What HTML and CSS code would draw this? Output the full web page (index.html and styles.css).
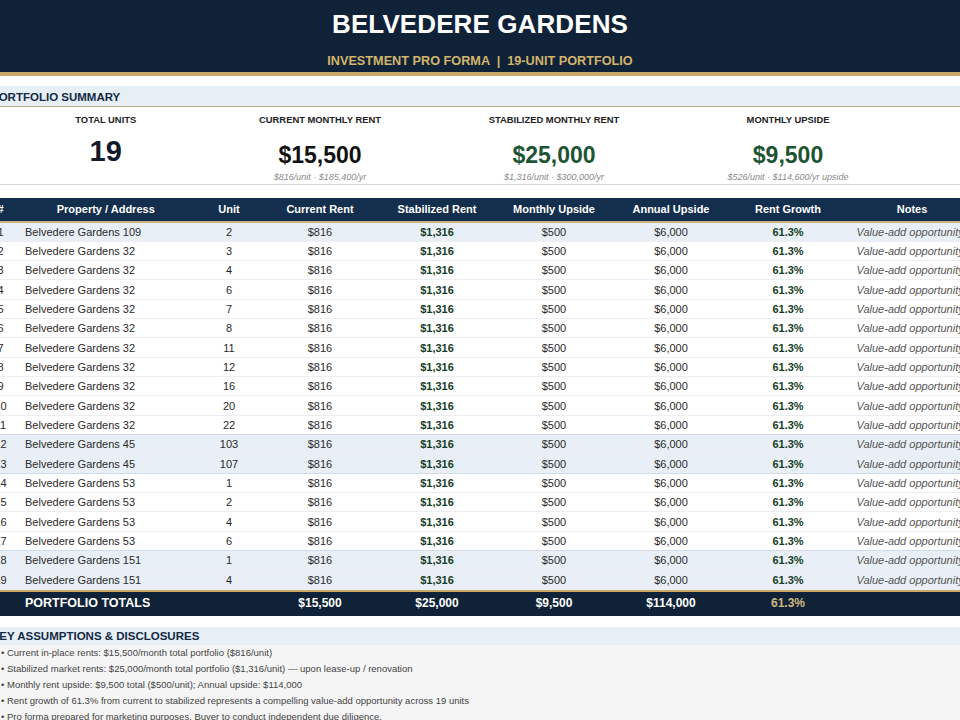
FILE: index.html
```html
<!DOCTYPE html>
<html>
<head>
<meta charset="utf-8">
<link rel="stylesheet" href="styles.css">
</head>
<body>
<div class="page">
  <header class="hero">
    <h1 class="hero-title">BELVEDERE GARDENS</h1>
    <div class="hero-sub">INVESTMENT PRO FORMA &nbsp;|&nbsp; 19-UNIT PORTFOLIO</div>
  </header>
  <div class="gold-rule"></div>

  <section class="summary">
    <div class="section-bar">PORTFOLIO SUMMARY</div>
    <div class="summary-grid">
      <div class="stat stat-units">
        <div class="stat-label">TOTAL UNITS</div>
        <div class="stat-big">19</div>
      </div>
      <div class="stat stat-current">
        <div class="stat-label">CURRENT MONTHLY RENT</div>
        <div class="stat-value">$15,500</div>
        <div class="stat-sub">$816/unit · $185,400/yr</div>
      </div>
      <div class="stat stat-stab">
        <div class="stat-label">STABILIZED MONTHLY RENT</div>
        <div class="stat-value green">$25,000</div>
        <div class="stat-sub">$1,316/unit · $300,000/yr</div>
      </div>
      <div class="stat stat-upside">
        <div class="stat-label">MONTHLY UPSIDE</div>
        <div class="stat-value green">$9,500</div>
        <div class="stat-sub">$526/unit · $114,600/yr upside</div>
      </div>
    </div>
  </section>

  <div class="table">
    <div class="row head">
      <div class="c num">#</div><div class="c">Property / Address</div><div class="c">Unit</div><div class="c">Current Rent</div><div class="c">Stabilized Rent</div><div class="c">Monthly Upside</div><div class="c">Annual Upside</div><div class="c">Rent Growth</div><div class="c">Notes</div>
    </div>
    <div class="row alt"><div class="c num">1</div><div class="c l">Belvedere Gardens 109</div><div class="c">2</div><div class="c">$816</div><div class="c b">$1,316</div><div class="c">$500</div><div class="c">$6,000</div><div class="c b">61.3%</div><div class="c n">Value-add opportunity</div></div>
    <div class="row"><div class="c num">2</div><div class="c l">Belvedere Gardens 32</div><div class="c">3</div><div class="c">$816</div><div class="c b">$1,316</div><div class="c">$500</div><div class="c">$6,000</div><div class="c b">61.3%</div><div class="c n">Value-add opportunity</div></div>
    <div class="row"><div class="c num">3</div><div class="c l">Belvedere Gardens 32</div><div class="c">4</div><div class="c">$816</div><div class="c b">$1,316</div><div class="c">$500</div><div class="c">$6,000</div><div class="c b">61.3%</div><div class="c n">Value-add opportunity</div></div>
    <div class="row"><div class="c num">4</div><div class="c l">Belvedere Gardens 32</div><div class="c">6</div><div class="c">$816</div><div class="c b">$1,316</div><div class="c">$500</div><div class="c">$6,000</div><div class="c b">61.3%</div><div class="c n">Value-add opportunity</div></div>
    <div class="row"><div class="c num">5</div><div class="c l">Belvedere Gardens 32</div><div class="c">7</div><div class="c">$816</div><div class="c b">$1,316</div><div class="c">$500</div><div class="c">$6,000</div><div class="c b">61.3%</div><div class="c n">Value-add opportunity</div></div>
    <div class="row"><div class="c num">6</div><div class="c l">Belvedere Gardens 32</div><div class="c">8</div><div class="c">$816</div><div class="c b">$1,316</div><div class="c">$500</div><div class="c">$6,000</div><div class="c b">61.3%</div><div class="c n">Value-add opportunity</div></div>
    <div class="row"><div class="c num">7</div><div class="c l">Belvedere Gardens 32</div><div class="c">11</div><div class="c">$816</div><div class="c b">$1,316</div><div class="c">$500</div><div class="c">$6,000</div><div class="c b">61.3%</div><div class="c n">Value-add opportunity</div></div>
    <div class="row"><div class="c num">8</div><div class="c l">Belvedere Gardens 32</div><div class="c">12</div><div class="c">$816</div><div class="c b">$1,316</div><div class="c">$500</div><div class="c">$6,000</div><div class="c b">61.3%</div><div class="c n">Value-add opportunity</div></div>
    <div class="row"><div class="c num">9</div><div class="c l">Belvedere Gardens 32</div><div class="c">16</div><div class="c">$816</div><div class="c b">$1,316</div><div class="c">$500</div><div class="c">$6,000</div><div class="c b">61.3%</div><div class="c n">Value-add opportunity</div></div>
    <div class="row"><div class="c num">10</div><div class="c l">Belvedere Gardens 32</div><div class="c">20</div><div class="c">$816</div><div class="c b">$1,316</div><div class="c">$500</div><div class="c">$6,000</div><div class="c b">61.3%</div><div class="c n">Value-add opportunity</div></div>
    <div class="row grp-end"><div class="c num">11</div><div class="c l">Belvedere Gardens 32</div><div class="c">22</div><div class="c">$816</div><div class="c b">$1,316</div><div class="c">$500</div><div class="c">$6,000</div><div class="c b">61.3%</div><div class="c n">Value-add opportunity</div></div>
    <div class="row alt"><div class="c num">12</div><div class="c l">Belvedere Gardens 45</div><div class="c">103</div><div class="c">$816</div><div class="c b">$1,316</div><div class="c">$500</div><div class="c">$6,000</div><div class="c b">61.3%</div><div class="c n">Value-add opportunity</div></div>
    <div class="row alt grp-end"><div class="c num">13</div><div class="c l">Belvedere Gardens 45</div><div class="c">107</div><div class="c">$816</div><div class="c b">$1,316</div><div class="c">$500</div><div class="c">$6,000</div><div class="c b">61.3%</div><div class="c n">Value-add opportunity</div></div>
    <div class="row"><div class="c num">14</div><div class="c l">Belvedere Gardens 53</div><div class="c">1</div><div class="c">$816</div><div class="c b">$1,316</div><div class="c">$500</div><div class="c">$6,000</div><div class="c b">61.3%</div><div class="c n">Value-add opportunity</div></div>
    <div class="row"><div class="c num">15</div><div class="c l">Belvedere Gardens 53</div><div class="c">2</div><div class="c">$816</div><div class="c b">$1,316</div><div class="c">$500</div><div class="c">$6,000</div><div class="c b">61.3%</div><div class="c n">Value-add opportunity</div></div>
    <div class="row"><div class="c num">16</div><div class="c l">Belvedere Gardens 53</div><div class="c">4</div><div class="c">$816</div><div class="c b">$1,316</div><div class="c">$500</div><div class="c">$6,000</div><div class="c b">61.3%</div><div class="c n">Value-add opportunity</div></div>
    <div class="row grp-end"><div class="c num">17</div><div class="c l">Belvedere Gardens 53</div><div class="c">6</div><div class="c">$816</div><div class="c b">$1,316</div><div class="c">$500</div><div class="c">$6,000</div><div class="c b">61.3%</div><div class="c n">Value-add opportunity</div></div>
    <div class="row alt"><div class="c num">18</div><div class="c l">Belvedere Gardens 151</div><div class="c">1</div><div class="c">$816</div><div class="c b">$1,316</div><div class="c">$500</div><div class="c">$6,000</div><div class="c b">61.3%</div><div class="c n">Value-add opportunity</div></div>
    <div class="row alt last"><div class="c num">19</div><div class="c l">Belvedere Gardens 151</div><div class="c">4</div><div class="c">$816</div><div class="c b">$1,316</div><div class="c">$500</div><div class="c">$6,000</div><div class="c b">61.3%</div><div class="c n">Value-add opportunity</div></div>
    <div class="row total">
      <div class="c num"></div><div class="c l">PORTFOLIO TOTALS</div><div class="c"></div><div class="c">$15,500</div><div class="c">$25,000</div><div class="c">$9,500</div><div class="c">$114,000</div><div class="c gold">61.3%</div><div class="c"></div>
    </div>
  </div>

  <section class="assumptions">
    <div class="section-bar plain">KEY ASSUMPTIONS &amp; DISCLOSURES</div>
    <ul class="notes">
      <li>• Current in-place rents: $15,500/month total portfolio ($816/unit)</li>
      <li>• Stabilized market rents: $25,000/month total portfolio ($1,316/unit) — upon lease-up / renovation</li>
      <li>• Monthly rent upside: $9,500 total ($500/unit); Annual upside: $114,000</li>
      <li>• Rent growth of 61.3% from current to stabilized represents a compelling value-add opportunity across 19 units</li>
      <li>• Pro forma prepared for marketing purposes. Buyer to conduct independent due diligence.</li>
    </ul>
  </section>
</div>
</body>
</html>
```

FILE: styles.css
```css
:root {
  --navy: #0f2238;
  --gold: #c9ab66;
  --cols: 36px 181.5px 65px 117px 117px 117px 117px 117px 131px;
}
html, body {
  margin: 0;
  padding: 0;
  background: #ffffff;
  overflow: hidden;
}
body {
  font-family: "Liberation Sans", Arial, sans-serif;
  color: #222;
}
.page {
  width: 999px;
  margin-left: -21px;
}
.hero {
  background: var(--navy);
  height: 72px;
  display: flex;
  flex-direction: column;
  align-items: center;
  margin: 0 18px 0 0;
  padding-left: 21px;
}
.hero-title {
  margin: 0;
  padding-top: 9px;
  font-size: 26px;
  line-height: 30px;
  font-weight: 700;
  color: #ffffff;
  letter-spacing: 0.1px;
}
.hero-sub {
  margin-top: 14px;
  font-size: 12.7px;
  line-height: 16px;
  font-weight: 700;
  color: #d3b46c;
}
.gold-rule {
  height: 4px;
  background: var(--gold);
  margin-bottom: 10px;
}
.section-bar {
  background: #e6eef6;
  height: 20px;
  line-height: 22px;
  padding-left: 12px;
  font-size: 11.5px;
  font-weight: 700;
  color: #132a44;
  border-bottom: 1.5px solid #b9ad8c;
}
.section-bar.plain {
  border-bottom: none;
  height: 18px;
  line-height: 19px;
}
.summary-grid {
  display: grid;
  grid-template-columns: var(--cols);
  border-bottom: 1.5px solid #d6d6d6;
  height: 77px;
}
.stat {
  justify-self: center;
  width: max-content;
  display: flex;
  flex-direction: column;
  align-items: center;
}
.stat-units { grid-column: 2; }
.stat-current { grid-column: 4; }
.stat-stab { grid-column: 6; }
.stat-upside { grid-column: 8; }
.stat-label {
  margin-top: 7px;
  font-size: 9.4px;
  line-height: 11px;
  font-weight: 700;
  color: #222;
}
.stat-big {
  margin-top: 10px;
  font-size: 29px;
  line-height: 32px;
  font-weight: 700;
  color: #141a2a;
}
.stat-value {
  margin-top: 17px;
  font-size: 23px;
  line-height: 26px;
  font-weight: 700;
  color: #111;
}
.stat-value.green { color: #1d5433; }
.stat-sub {
  margin-top: 4px;
  font-size: 9px;
  line-height: 11px;
  font-style: italic;
  color: #8a8a8a;
}
.table {
  margin-top: 13px;
}
.row {
  display: grid;
  grid-template-columns: var(--cols);
  height: 19.33px;
  align-items: center;
  font-size: 11px;
  color: #2a2a2a;
  border-bottom: 1px solid #eceef1;
  box-sizing: border-box;
  white-space: nowrap;
}
.row .c { text-align: center; overflow: visible; }
.row .c.num { padding-left: 7px; }
.row .c.l { text-align: left; padding-left: 10px; }
.row .c.b { font-weight: 700; color: #173d27; }
.row .c.n { text-align: left; padding-left: 10px; font-style: italic; color: #555; }
.row.alt { background: #e8eff6; }
.row.grp-end { border-bottom-color: #d5dbe2; }
.row.head {
  background: #142e4d;
  height: 24.5px;
  color: #ffffff;
  font-weight: 700;
  border-bottom: 2px solid #c9b47e;
}
.row.last { border-bottom: none; }
.row.total {
  background: var(--navy);
  height: 26px;
  border-top: 2px solid var(--gold);
  border-bottom: none;
  color: #fff;
  font-weight: 700;
  font-size: 12px;
  padding-bottom: 1px;
}
.row.total .c.l { font-size: 12.5px; }
.row.total .gold { color: #cdb87e; }
.assumptions {
  margin-top: 11px;
}
.notes {
  list-style: none;
  margin: 0;
  padding: 0 0 10px 22px;
  background: #f5f5f5;
}
.notes li {
  font-size: 9.5px;
  line-height: 16px;
  color: #444;
}
```
